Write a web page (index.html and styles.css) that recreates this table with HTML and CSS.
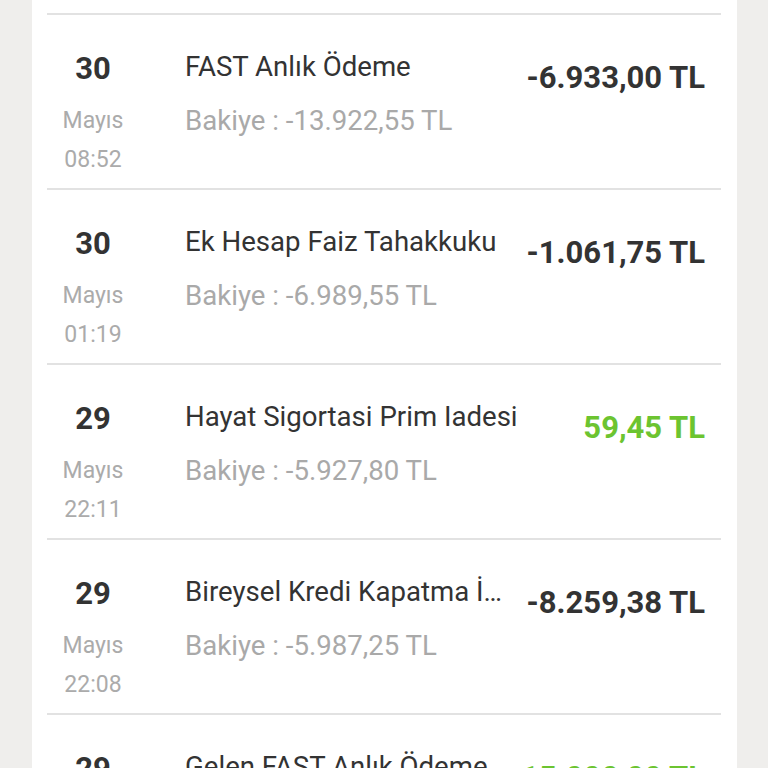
FILE: index.html
```html
<!DOCTYPE html>
<html lang="tr">
<head>
<meta charset="utf-8">
<link rel="stylesheet" href="styles.css">
</head>
<body>
<div class="card">
  <div class="row">
    <div class="date"><div class="day">30</div><div class="month">Mayıs</div><div class="time">08:52</div></div>
    <div class="info"><div class="title">FAST Anlık Ödeme</div><div class="balance">Bakiye : -13.922,55 TL</div></div>
    <div class="amount">-6.933,00 TL</div>
  </div>
  <div class="row">
    <div class="date"><div class="day">30</div><div class="month">Mayıs</div><div class="time">01:19</div></div>
    <div class="info"><div class="title">Ek Hesap Faiz Tahakkuku</div><div class="balance">Bakiye : -6.989,55 TL</div></div>
    <div class="amount">-1.061,75 TL</div>
  </div>
  <div class="row">
    <div class="date"><div class="day">29</div><div class="month">Mayıs</div><div class="time">22:11</div></div>
    <div class="info"><div class="title">Hayat Sigortasi Prim Iadesi</div><div class="balance">Bakiye : -5.927,80 TL</div></div>
    <div class="amount plus">59,45 TL</div>
  </div>
  <div class="row">
    <div class="date"><div class="day">29</div><div class="month">Mayıs</div><div class="time">22:08</div></div>
    <div class="info"><div class="title">Bireysel Kredi Kapatma İşlemi Tahsilatı</div><div class="balance">Bakiye : -5.987,25 TL</div></div>
    <div class="amount">-8.259,38 TL</div>
  </div>
  <div class="row">
    <div class="date"><div class="day">29</div><div class="month">Mayıs</div><div class="time">21:40</div></div>
    <div class="info"><div class="title">Gelen FAST Anlık Ödeme</div><div class="balance">Bakiye : 2.272,13 TL</div></div>
    <div class="amount plus">15.000,00 TL</div>
  </div>
</div>
</body>
</html>
```
FILE: styles.css
```css
html, body {
  margin: 0;
  padding: 0;
  background: #efeeec;
  font-family: Roboto, "Liberation Sans", sans-serif;
  overflow: hidden;
  height: 768px;
}
.card {
  margin-left: 32px;
  width: 705px;
  background: #ffffff;
  padding: 13px 16px 0 15px;
  box-sizing: border-box;
  min-height: 768px;
}
.row {
  display: flex;
  align-items: flex-start;
  border-top: 2px solid #e2e2e2;
  padding: 0 16px 0 0;
  height: 173px;
}
.date {
  width: 92px;
  flex: none;
  text-align: center;
  margin-right: 46px;
}
.day {
  margin-top: 35px;
  font-size: 31px;
  font-weight: 700;
  line-height: 38px;
  color: #333333;
}
.month, .time {
  font-size: 23px;
  line-height: 38px;
  color: #ababab;
}
.month { margin-top: 14px; }
.time { margin-top: 1px; }
.info {
  flex: 1;
  min-width: 0;
  margin-top: 34px;
}
.title {
  font-size: 27.6px;
  line-height: 36px;
  color: #333333;
  white-space: nowrap;
  overflow: hidden;
  text-overflow: ellipsis;
}
.balance {
  margin-top: 18px;
  font-size: 27.6px;
  line-height: 36px;
  color: #a9a9a9;
  white-space: nowrap;
}
.amount {
  flex: none;
  margin-left: 12px;
  margin-top: 44px;
  font-size: 31px;
  font-weight: 700;
  line-height: 38px;
  color: #333333;
  white-space: nowrap;
}
.amount.plus { color: #6cc430; }
```
